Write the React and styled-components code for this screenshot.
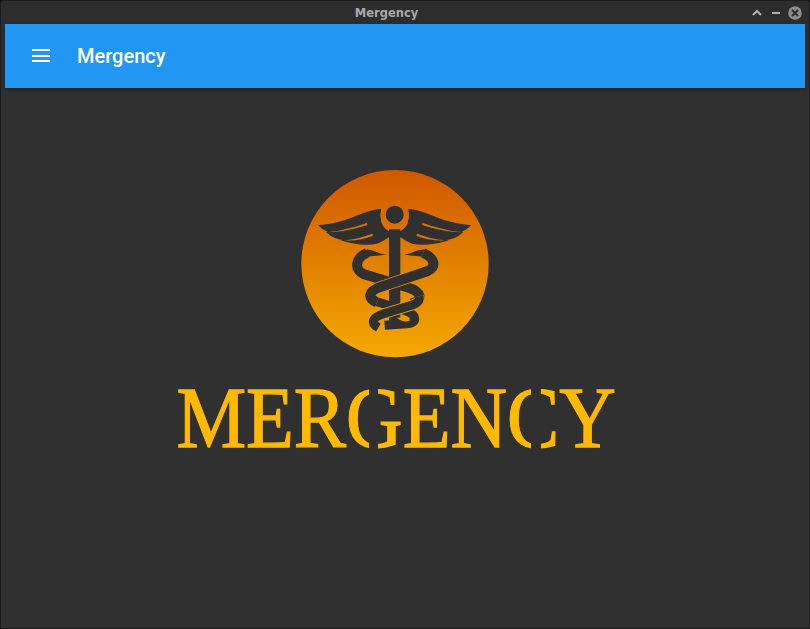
import styled, { createGlobalStyle } from 'styled-components';

const Reset = createGlobalStyle` html, body { margin: 0; padding: 0; background: #111; } #root { width: 810px; height: 629px; overflow: hidden; } `;

const Window = styled.div` width: 810px; height: 629px; box-sizing: border-box; background: #303030; border: 1px solid #1c1c1c; border-radius: 4px 4px 0 0; display: flex; flex-direction: column; overflow: hidden; `;
const TitleBar = styled.div` height: 23px; flex: none; background: #2d2d2d; display: flex; align-items: center; padding: 0 7px 0 0; `;
const TitleText = styled.div` flex: 1; text-align: center; padding-left: 22px; font: bold 11.5px 'DejaVu Sans', sans-serif; color: #a9a9a9; `;
const WinButtons = styled.div` display: flex; align-items: center; gap: 5px; `;
const AppBar = styled.header` height: 64px; flex: none; margin: 0 4px; background: #2196f3; display: flex; align-items: center; padding-left: 27px; gap: 27px; box-shadow: 0 2px 4px rgba(0,0,0,0.3); `;
const AppTitle = styled.h1` margin: 0; font: 500 20px 'Roboto', sans-serif; color: #fff; `;
const Main = styled.main` flex: 1; display: flex; flex-direction: column; align-items: center; padding: 82px 20px 0 0; `;
const Wordmark = styled.div` margin-top: 23px; margin-left: 3px; font: 400 87px/74px 'Liberation Serif', serif; color: #ffb900; -webkit-text-stroke: 1.3px #ffb900; transform: scaleX(0.9); white-space: nowrap; `;
const Stencil = styled.span` position: relative; display: inline-block; `;
const Gap = styled.i` position: absolute; left: ${p => p.$left}px; top: ${p => p.$top}px; width: ${p => p.$width}px; height: 10px; background: #303030; `;

const MenuIcon = () => (
  <svg width="18" height="14" viewBox="0 0 18 14"><path d="M0 1h18M0 7h18M0 12h18" stroke="#fff" strokeWidth="2" /></svg>
);

const UpIcon = () => (
  <svg width="14" height="14" viewBox="0 0 14 14"><path d="M3 9l4-4 4 4" fill="none" stroke="#b4b4b4" strokeWidth="2" /></svg>
);
const MinIcon = () => (
  <svg width="14" height="14" viewBox="0 0 14 14"><path d="M3 7h8" stroke="#b4b4b4" strokeWidth="2" /></svg>
);
const CloseIcon = () => (
  <svg width="14" height="14" viewBox="0 0 14 14">
    <circle cx="7" cy="7" r="6.8" fill="#8c8c8c" />
    <path d="M4 4l6 6M10 4l-6 6" stroke="#2d2d2d" strokeWidth="2" />
  </svg>
);

const DARK = '#303030';
const HALO = 'url(#badge)';

// caduceus traced in the 3x crop coordinates of the badge
const Wing = () => (
  <>
    <path d="M272 148C235 150 205 168 165 182C140 190 115 194 90 196C100 206 112 212 125 214L113 216C125 228 145 236 167 238L160 240C190 250 235 255 262 248C280 243 292 232 298 228L298 215C280 205 272 190 272 175Z" fill={DARK} stroke={DARK} strokeWidth="4" />
    <path d="M232 187C200 199 160 210 113 216C160 214 200 205 233 194Z" fill={HALO} />
    <path d="M248 220C222 230 195 237 163 240C195 242 225 236 250 226Z" fill={HALO} />
  </>
);

const Band = ({ d, w = 30, halo }) => (
  <>
    {halo && <path d={d} fill="none" stroke={HALO} strokeWidth={w + 5} />}
    <path d={d} fill="none" stroke={DARK} strokeWidth={w} />
  </>
);

const Badge = () => (
  <svg width="188" height="188" viewBox="34 29 564 564">
    <defs>
      <linearGradient id="badge" gradientUnits="userSpaceOnUse" x1="0" y1="30" x2="0" y2="592">
        <stop offset="0" stopColor="#d05800" />
        <stop offset="1" stopColor="#f4a900" />
      </linearGradient>
    </defs>
    <circle cx="316" cy="310" r="281" fill={HALO} />
    <Wing />
    <g transform="translate(630 0) scale(-1 1)"><Wing /></g>
    <circle cx="315" cy="165" r="43" fill={HALO} />
    <circle cx="315" cy="163" r="27" fill={DARK} />
    <rect x="298" y="207" width="34" height="285" fill={DARK} />
    {/* lower half of the right snake, goes under the left one */}
    <Band d="M262 424L350 452C385 465 382 490 350 490L285 495" w={27} />
    <path d="M322 472C335 484 350 486 362 480C356 472 340 468 322 472Z" fill={HALO} />
    {/* left snake */}
    <path d="M290 281C268 284 256 268 236 268C224 267 218 272 218 278L232 290C250 286 270 288 290 281Z" fill={DARK} />
    <Band d="M232 278C198 292 190 328 224 342L350 380C398 393 402 420 365 430" />
    <Band d="M388 408C392 424 380 430 365 435L282 460C246 472 242 488 266 502" w={27} halo />
    {/* right snake, top loop and the band that crosses over */}
    <path d="M342 281C364 284 376 268 396 268C408 267 414 272 414 278L400 290C382 286 362 288 342 281Z" fill={DARK} />
    <Band d="M400 278C434 292 444 320 412 333L272 380C236 392 232 414 262 426" halo />
  </svg>
);

export default function App() {
  return (
    <Window>
      <Reset />
      <TitleBar>
        <TitleText>Mergency</TitleText>
        <WinButtons><UpIcon /><MinIcon /><CloseIcon /></WinButtons>
      </TitleBar>
      <AppBar>
        <MenuIcon />
        <AppTitle>Mergency</AppTitle>
      </AppBar>
      <Main>
        <Badge />
        <Wordmark>
          MER
          <Stencil>G<Gap $left={25} $top={4} $width={10} /><Gap $left={25} $top={61} $width={10} /></Stencil>
          EN
          <Stencil>C<Gap $left={27} $top={4} $width={11} /><Gap $left={27} $top={61} $width={11} /></Stencil>
          Y
        </Wordmark>
      </Main>
    </Window>
  );
}
